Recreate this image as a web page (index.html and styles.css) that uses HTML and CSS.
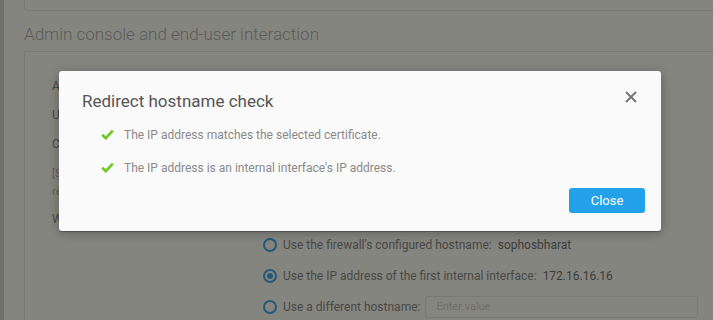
FILE: index.html
```html
<!DOCTYPE html>
<html lang="en">
<head>
  <meta charset="UTF-8">
  <meta name="viewport" content="width=device-width, initial-scale=1.0">
  <title>Admin settings | Redirect hostname check</title>
  <link rel="stylesheet" href="styles.css">
</head>
<body>
  <div class="layout">
    <div class="side-edge"></div>

    <div class="main">
      <div class="card card-top"></div>

      <h2 class="section-title">Admin console and end-user interaction</h2>

      <div class="card card-settings">
        <div class="field-label first">Admin console HTTPS port</div>
        <div class="field-label">User portal HTTPS port</div>
        <div class="field-label">Certificate</div>
        <div class="field-label small">[Self-signed certificate] used for the admin console,<br>redirect to this hostname</div>
        <div class="field-label last">When redirecting</div>

        <div class="radio-list">
          <div class="radio-row">
            <span class="radio"></span>
            <span class="radio-text">Use the firewall's configured hostname:</span>
            <span class="radio-value">sophosbharat</span>
          </div>
          <div class="radio-row">
            <span class="radio checked"></span>
            <span class="radio-text">Use the IP address of the first internal interface:</span>
            <span class="radio-value">172.16.16.16</span>
          </div>
          <div class="radio-row">
            <span class="radio"></span>
            <span class="radio-text">Use a different hostname:</span>
            <input type="text" class="text-input" placeholder="Enter value">
          </div>
        </div>
      </div>
    </div>
  </div>

  <div class="modal">
    <div class="modal-header">
      <h3 class="modal-title">Redirect hostname check</h3>
      <button class="modal-close" aria-label="Close">
        <svg width="12" height="12" viewBox="0 0 12 12">
          <path d="M1 1 L11 11 M11 1 L1 11" stroke="#777" stroke-width="2" fill="none"/>
        </svg>
      </button>
    </div>

    <ul class="check-list">
      <li>
        <svg class="check-icon" width="13" height="11" viewBox="0 0 13 11">
          <path d="M1.2 5.8 L4.8 9.2 L11.8 1.6" stroke="#6cc823" stroke-width="2.6" fill="none"/>
        </svg>
        The IP address matches the selected certificate.
      </li>
      <li>
        <svg class="check-icon" width="13" height="11" viewBox="0 0 13 11">
          <path d="M1.2 5.8 L4.8 9.2 L11.8 1.6" stroke="#6cc823" stroke-width="2.6" fill="none"/>
        </svg>
        The IP address is an internal interface's IP address.
      </li>
    </ul>

    <div class="modal-footer">
      <button class="btn-primary">Close</button>
    </div>
  </div>
</body>
</html>
```

FILE: styles.css
```css
* {
  margin: 0;
  padding: 0;
  box-sizing: border-box;
  font-family: Roboto, 'Liberation Sans', sans-serif;
}

body {
  background-color: #858580;
  width: 713px;
  height: 320px;
  overflow: hidden;
}

.layout {
  display: flex;
  height: 320px;
}

.side-edge {
  width: 4px;
  flex-shrink: 0;
  background-color: #70716b;
}

.main {
  flex: 1;
  padding-left: 20px;
  overflow: hidden;
}

.card {
  border: 1px solid #7a7a75;
  border-radius: 3px;
  margin-right: -12px;
}

.card-top {
  height: 22px;
  margin-top: -11px;
}

.section-title {
  font-size: 17px;
  font-weight: 300;
  color: #5b5b57;
  margin: 13px 0 7px;
  line-height: 20px;
}

.card-settings {
  height: 300px;
  padding: 26px 0 0 27px;
  border-bottom: none;
}

.field-label {
  font-size: 12px;
  color: #484844;
  line-height: 16px;
  margin-bottom: 13px;
}

.field-label.small {
  font-size: 11px;
  line-height: 18px;
  color: #5e5e5a;
  margin-top: 9px;
  margin-bottom: 10px;
}

.field-label.last {
  margin-bottom: 7px;
}

.radio-list {
  margin-left: 211px;
  display: flex;
  flex-direction: column;
  gap: 10px;
}

.radio-row {
  display: flex;
  align-items: center;
  height: 21px;
  font-size: 12px;
  color: #484845;
}

.radio {
  width: 14px;
  height: 14px;
  border: 2px solid #24597a;
  border-radius: 50%;
  margin-right: 6px;
  display: flex;
  align-items: center;
  justify-content: center;
}

.radio.checked::after {
  content: '';
  width: 6px;
  height: 6px;
  border-radius: 50%;
  background-color: #24597a;
}

.radio-value {
  margin-left: 6px;
  color: #3c3c39;
}

.text-input {
  margin-left: 5px;
  width: 273px;
  height: 22px;
  border: 1px solid #7a7a75;
  border-radius: 3px;
  background-color: #858580;
  padding-left: 10px;
  font-size: 11px;
  color: #444;
}

.text-input::placeholder {
  color: #6e6e69;
}

.modal {
  position: absolute;
  left: 59px;
  top: 71px;
  width: 602px;
  height: 160px;
  background-color: #fafafa;
  border-radius: 3px;
  box-shadow: 0 2px 12px rgba(0, 0, 0, 0.3), 0 1px 0 rgba(0, 0, 0, 0.25);
  padding: 20px 23px 0;
}

.modal-header {
  display: flex;
  justify-content: space-between;
  align-items: center;
  height: 20px;
}

.modal-title {
  font-size: 17px;
  font-weight: 400;
  color: #555;
}

.modal-close {
  border: none;
  background: none;
  width: 12px;
  height: 12px;
  margin-right: 1px;
  margin-top: -9px;
  cursor: pointer;
}

.check-list {
  list-style: none;
  margin-top: 15px;
  padding-left: 19px;
}

.check-list li {
  display: flex;
  align-items: center;
  height: 17px;
  font-size: 12px;
  color: #8a8a8a;
  margin-bottom: 16px;
}

.check-icon {
  margin-right: 10px;
}

.modal-footer {
  display: flex;
  justify-content: flex-end;
  margin-top: -4px;
}

.btn-primary {
  width: 76px;
  height: 25px;
  margin-right: -7px;
  border: none;
  border-radius: 3px;
  background-color: #23a2eb;
  color: #fff;
  font-size: 13px;
  cursor: pointer;
}
```
